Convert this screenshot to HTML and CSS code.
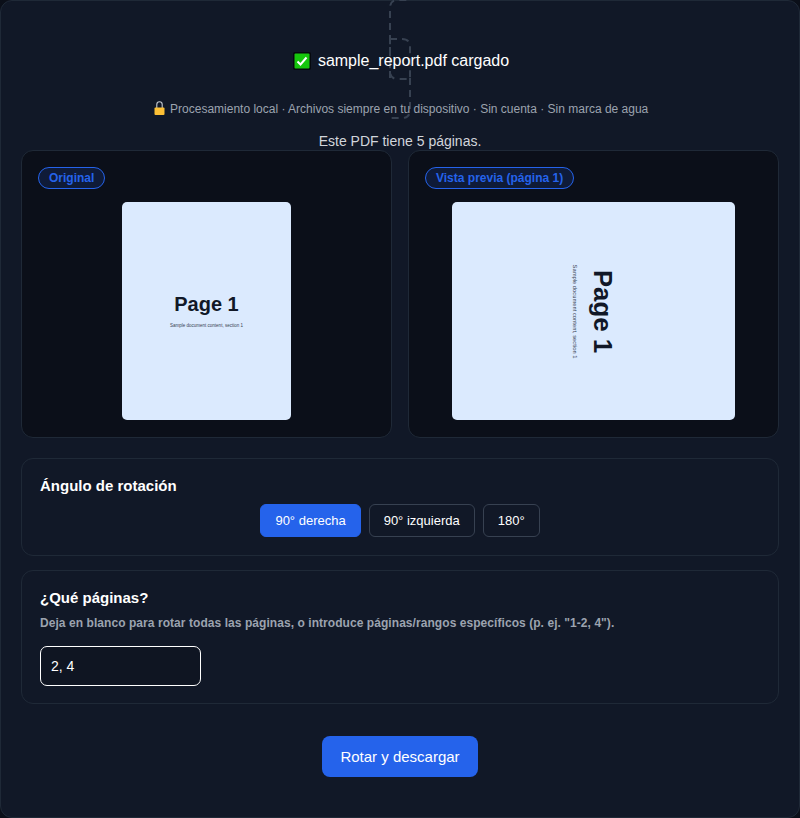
FILE: index.html
```html
<!DOCTYPE html>
<html lang="es">
<head>
  <meta charset="UTF-8" />
  <meta name="viewport" content="width=device-width, initial-scale=1.0"/>
  <title>Rotar PDF</title>
  <link rel="stylesheet" href="styles.css">
</head>
<body>
  <main class="tool">

    <!-- Dashed upload outline left behind the header -->
    <svg class="dashes" width="24" height="122" viewBox="0 0 24 122" fill="none">
      <path d="M2 80V10Q2 2 10 2H22" />
      <path d="M22 80V112Q22 120 14 120H2" />
      <path d="M2 41H14Q22 41 22 49V81H10Q2 81 2 73V41" />
    </svg>

    <header class="file-head">
      <h2 class="file-name">
        <svg class="check" width="18" height="18" viewBox="0 0 18 18">
          <rect width="18" height="18" rx="2" fill="#06090f" />
          <rect x="1.5" y="1.5" width="15" height="15" rx="1" fill="#16c60c" />
          <path d="M4.5 9.5L7.5 12.5L13.5 5.5" fill="none" stroke="#fff" stroke-width="2" />
        </svg>
        sample_report.pdf cargado
      </h2>
      <p class="privacy">
        <svg class="lock" width="11" height="14" viewBox="0 0 11 14">
          <path d="M2.8 7V3.5a2.7 2.7 0 0 1 5.4 0V7" fill="none" stroke="#c4cad0" stroke-width="1.1" />
          <rect x="0.5" y="6.5" width="10" height="7.5" rx="1" fill="#fcbf35" />
        </svg>
        Procesamiento local · Archivos siempre en tu dispositivo · Sin cuenta · Sin marca de agua
      </p>
      <p class="page-count">Este PDF tiene 5 páginas.</p>
    </header>

    <section class="previews">
      <div class="preview">
        <span class="tag">Original</span>
        <div class="stage">
          <div class="sheet sheet-portrait">
            <div class="sheet-text">
              <div class="sheet-title">Page 1</div>
              <div class="sheet-sub">Sample document content, section 1</div>
            </div>
          </div>
        </div>
      </div>
      <div class="preview">
        <span class="tag">Vista previa (página 1)</span>
        <div class="stage">
          <div class="sheet sheet-landscape">
            <div class="sheet-text sheet-rotated">
              <div class="sheet-title">Page 1</div>
              <div class="sheet-sub">Sample document content, section 1</div>
            </div>
          </div>
        </div>
      </div>
    </section>

    <section class="panel panel-angle">
      <h3 class="panel-title">Ángulo de rotación</h3>
      <div class="angles">
        <button class="angle active">90° derecha</button>
        <button class="angle">90° izquierda</button>
        <button class="angle">180°</button>
      </div>
    </section>

    <section class="panel panel-pages">
      <h3 class="panel-title">¿Qué páginas?</h3>
      <p class="panel-hint">Deja en blanco para rotar todas las páginas, o introduce páginas/rangos específicos (p. ej. "1-2, 4").</p>
      <input class="pages-input" type="text" value="2, 4" />
    </section>

    <div class="actions">
      <button class="submit">Rotar y descargar</button>
    </div>
  </main>
</body>
</html>
```

FILE: styles.css
```css
* {
  box-sizing: border-box;
}

body {
  margin: 0;
  background: #0b0f19;
  font-family: "Liberation Sans", Arial, sans-serif;
  color: #fff;
}

.tool {
  position: relative;
  height: 818px;
  padding: 0 20px;
  background: #111827;
  border: 1px solid #1f2937;
  border-radius: 12px;
}

.dashes {
  position: absolute;
  left: 387px;
  top: -3px;
}
.dashes path {
  stroke: #374151;
  stroke-width: 2;
  stroke-dasharray: 7 5;
}


.file-head {
  position: relative;
  text-align: center;
}
.file-name {
  display: flex;
  justify-content: center;
  align-items: center;
  gap: 7px;
  margin: 0;
  padding: 49px 0 0 2px;
  height: 70px;
  font-size: 16px;
  font-weight: 400;
}
.privacy {
  margin: 30px 0 0;
  padding-left: 2px;
  font-size: 12px;
  line-height: 16px;
  color: #9ca3af;
}
.lock {
  margin-right: 2px;
  vertical-align: -2px;
}
.page-count {
  margin: 16px 0 0;
  font-size: 14px;
  line-height: 17px;
  color: #d1d5db;
}


.previews {
  display: grid;
  grid-template-columns: 1fr 1fr;
  gap: 16px;
}
.preview {
  height: 288px;
  padding: 16px;
  background: #0b0f19;
  border: 1px solid #1f2937;
  border-radius: 12px;
}
.tag {
  display: inline-block;
  padding: 0 10px;
  height: 22px;
  font-size: 12px;
  font-weight: 700;
  line-height: 20px;
  color: #2563eb;
  background: rgba(37, 99, 235, 0.15);
  border: 1px solid #2563eb;
  border-radius: 999px;
}
.stage {
  display: flex;
  justify-content: center;
  margin-top: 13px;
}
.sheet {
  display: flex;
  justify-content: center;
  align-items: center;
  height: 218px;
  background: #dbeafe;
  border-radius: 5px;
}
.sheet-portrait {
  width: 169px;
}
.sheet-landscape {
  width: 283px;
}
.sheet-text {
  margin-top: -2px;
  text-align: center;
  white-space: nowrap;
  color: #111827;
}
.sheet-rotated {
  margin: 0 0 0 1px;
  transform: rotate(90deg) scale(1.29);
}
.sheet-title {
  font-size: 20px;
  font-weight: 700;
  line-height: 24px;
}
.sheet-sub {
  margin-top: 7px;
  font-size: 4.5px;
  line-height: 6px;
  color: #374151;
}


.panel {
  padding: 18px;
  border: 1px solid #1f2937;
  border-radius: 12px;
}
.panel-angle {
  height: 98px;
  margin-top: 20px;
}
.panel-pages {
  height: 134px;
  margin-top: 14px;
}
.panel-title {
  margin: 0;
  font-size: 15px;
  font-weight: 700;
  line-height: 17px;
}
.angles {
  display: flex;
  justify-content: center;
  gap: 8px;
  margin-top: 10px;
}
.angle {
  height: 33px;
  padding: 0 14px;
  font-family: inherit;
  font-size: 13px;
  color: #fff;
  background: transparent;
  border: 1px solid #374151;
  border-radius: 6px;
}
.angle.active {
  background: #2563eb;
  border-color: #2563eb;
}
.panel-hint {
  margin: 9px 0 0;
  font-size: 12px;
  font-weight: 700;
  letter-spacing: 0.06px;
  line-height: 16px;
  color: #9ca3af;
}
.pages-input {
  display: block;
  width: 161px;
  height: 40px;
  margin-top: 15px;
  padding: 0 10px;
  font-family: inherit;
  font-size: 14px;
  color: #fff;
  background: #0f1522;
  border: 1px solid #fff;
  border-radius: 7px;
}


.actions {
  display: flex;
  justify-content: center;
  margin-top: 32px;
}
.submit {
  width: 156px;
  height: 41px;
  font-family: inherit;
  font-size: 15px;
  color: #fff;
  background: #2563eb;
  border: none;
  border-radius: 8px;
}
```
